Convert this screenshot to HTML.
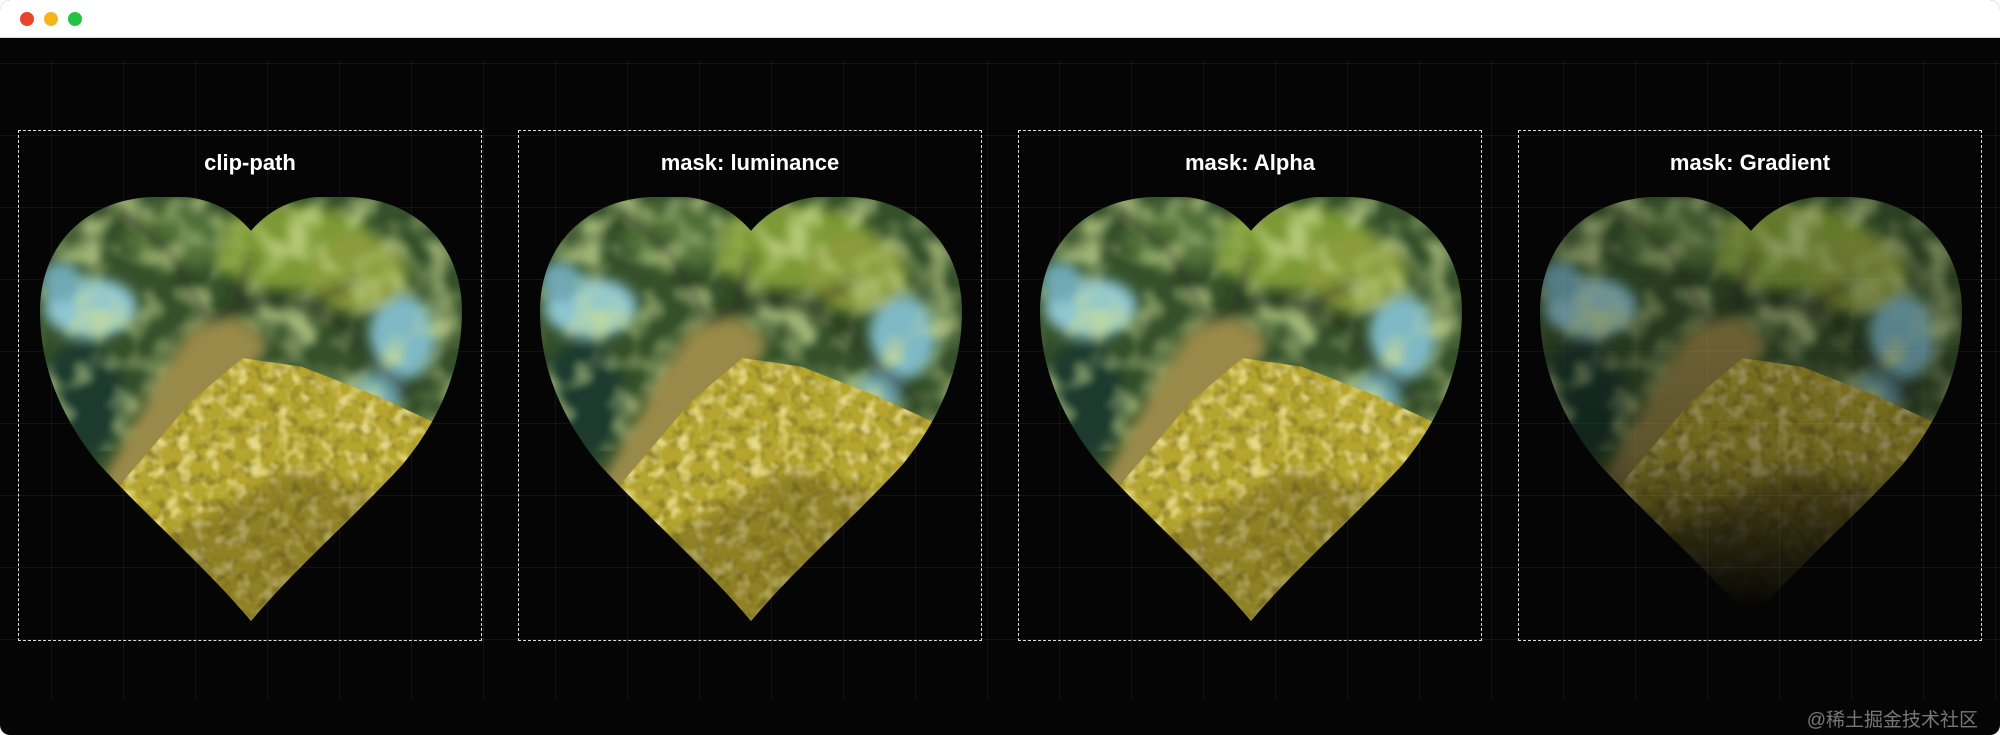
<!DOCTYPE html>
<html><head><meta charset="utf-8"><style>
html,body{margin:0;padding:0;width:2000px;height:735px;overflow:hidden;background:#fff;}
.win{position:absolute;left:0;top:0;width:2000px;height:735px;background:#050505;border-radius:10px;overflow:hidden;}
.bar{position:absolute;left:0;top:0;width:2000px;height:37px;background:#fff;border-bottom:1px solid #ddd;}
.dot{position:absolute;top:12px;width:14px;height:14px;border-radius:50%;}
.grid{position:absolute;left:0;top:60px;width:2000px;height:640px;
background-image:linear-gradient(to right,rgba(255,255,255,0.055) 1px,transparent 1px),linear-gradient(to bottom,rgba(255,255,255,0.055) 1px,transparent 1px);
background-size:72px 72px;background-position:51px 3px;}
.box{position:absolute;top:130px;width:462px;height:509px;border:1.5px dashed #ddd;}
.t{position:absolute;top:150px;width:464px;text-align:center;color:#fff;font:bold 22px "Liberation Sans",sans-serif;}
svg.h{position:absolute;top:197px;width:422px;height:424px;}
.wm{position:absolute;right:22px;top:705px;color:#777;font:19px "Liberation Sans","Noto Sans CJK SC",sans-serif;}
</style></head><body>
<div class="win">
<div class="bar"><div class="dot" style="left:20px;background:#e9442b"></div><div class="dot" style="left:44px;background:#f4b51c"></div><div class="dot" style="left:68px;background:#22c442"></div></div>
<div class="grid"></div>
<svg width="0" height="0" style="position:absolute">
<defs>
<filter id="b" x="-10%" y="-10%" width="120%" height="120%"><feGaussianBlur stdDeviation="1.5"/></filter>
<filter id="n" x="0" y="0" width="100%" height="100%"><feTurbulence type="fractalNoise" baseFrequency="0.35" numOctaves="2" seed="3"/><feColorMatrix type="matrix" values="0 0 0 0 0.25  0 0 0 0 0.2  0 0 0 0 0.02  0 0 0 -3 1.6"/><feComposite in2="SourceGraphic" operator="in"/></filter>
<filter id="n2" x="0" y="0" width="100%" height="100%"><feTurbulence type="fractalNoise" baseFrequency="0.3" numOctaves="2" seed="9"/><feColorMatrix type="matrix" values="0 0 0 0 0.95  0 0 0 0 0.85  0 0 0 0 0.4  0 0 0 3 -1.4"/><feComposite in2="SourceGraphic" operator="in"/></filter>
<filter id="n3" x="0" y="0" width="100%" height="100%"><feTurbulence type="fractalNoise" baseFrequency="0.12" numOctaves="2" seed="5"/><feColorMatrix type="matrix" values="0 0 0 0 0.6  0 0 0 0 0.72  0 0 0 0 0.3  0 0 0 3 -1.3"/><feComposite in2="SourceGraphic" operator="in"/><feGaussianBlur stdDeviation="0.6"/></filter>
<clipPath id="hc" clipPathUnits="objectBoundingBox"><path transform="scale(0.01)" d="M50,8 C44,1 36,-1 26,0 C10,1 0,12 0,27 C0,40 5,52 14,63 C26,76 40,88 50,100 C60,88 74,76 86,63 C95,52 100,40 100,27 C100,12 90,1 74,0 C64,-1 56,1 50,8 Z"/></clipPath>
<linearGradient id="fg" x1="0" y1="0" x2="0" y2="1"><stop offset="0" stop-color="#fff" stop-opacity="0.8"/><stop offset="0.6" stop-color="#fff" stop-opacity="0.6"/><stop offset="0.97" stop-color="#fff" stop-opacity="0"/></linearGradient>
<mask id="fm" maskUnits="userSpaceOnUse" x="0" y="0" width="100" height="100"><rect width="100" height="100" fill="url(#fg)"/></mask>
<g id="img">
<rect width="100" height="100" fill="#35502a"/>
<g filter="url(#b)">
<ellipse cx="12" cy="26" rx="11" ry="7" fill="#8fc7d3"/>
<ellipse cx="5" cy="20" rx="5" ry="5" fill="#6fa8b3"/>
<ellipse cx="86" cy="33" rx="8" ry="10" fill="#7fb9c6"/>
<ellipse cx="80" cy="46" rx="6" ry="5" fill="#6aa3b0"/>
<ellipse cx="60" cy="12" rx="20" ry="10" fill="#7d9a36"/>
<ellipse cx="32" cy="10" rx="12" ry="7" fill="#53733a"/>
<ellipse cx="10" cy="48" rx="10" ry="14" fill="#1e3a2e"/>
<ellipse cx="75" cy="18" rx="12" ry="9" fill="#8c9c3c"/>
</g>
<rect width="100" height="60" fill="#fff" filter="url(#n3)" opacity="0.7"/>
<path d="M18,3 L30,12 L36,22 L40,30 M40,30 L48,25 L58,24 L72,30 L80,40 L90,48 M46,24 L50,14 M62,26 L75,20" stroke="#1f2416" stroke-width="1.2" fill="none" filter="url(#b)" opacity="0.9"/>
<path d="M10,75 L30,40 L36,31 L46,28 L54,34 L40,60 Z" fill="#9a8a48" filter="url(#b)"/>
<path d="M12,76 L36,48 L48,38 L62,40 L80,47 L93,53 L90,62 L70,100 L10,100 Z" fill="#b6a630"/>
<path d="M12,76 L36,48 L48,38 L62,40 L80,47 L93,53 L90,62 L70,100 L10,100 Z" fill="#fff" filter="url(#n)" opacity="0.8"/>
<path d="M12,76 L36,48 L48,38 L62,40 L80,47 L93,53 L90,62 L70,100 L10,100 Z" fill="#fff" filter="url(#n2)" opacity="0.7"/>
<path d="M30,80 L60,64 L80,70 L55,100 L35,100 Z" fill="#3a2e0c" opacity="0.3" filter="url(#b)"/>
</g>
</defs></svg>

<div class="box" style="left:18px"></div><div class="t" style="left:18px">clip-path</div>
<svg class="h" style="left:40px" viewBox="0 0 100 100" preserveAspectRatio="none"><g clip-path="url(#hc)"><use href="#img"/></g></svg>

<div class="box" style="left:518px"></div><div class="t" style="left:518px">mask: luminance</div>
<svg class="h" style="left:540px" viewBox="0 0 100 100" preserveAspectRatio="none"><g clip-path="url(#hc)"><use href="#img"/></g></svg>

<div class="box" style="left:1018px"></div><div class="t" style="left:1018px">mask: Alpha</div>
<svg class="h" style="left:1040px" viewBox="0 0 100 100" preserveAspectRatio="none"><g clip-path="url(#hc)"><use href="#img"/></g></svg>

<div class="box" style="left:1518px"></div><div class="t" style="left:1518px">mask: Gradient</div>
<svg class="h" style="left:1540px" viewBox="0 0 100 100" preserveAspectRatio="none"><g clip-path="url(#hc)"><g mask="url(#fm)"><use href="#img"/></g></g></svg>

<div class="wm">@稀土掘金技术社区</div>
</div>
</body></html>
